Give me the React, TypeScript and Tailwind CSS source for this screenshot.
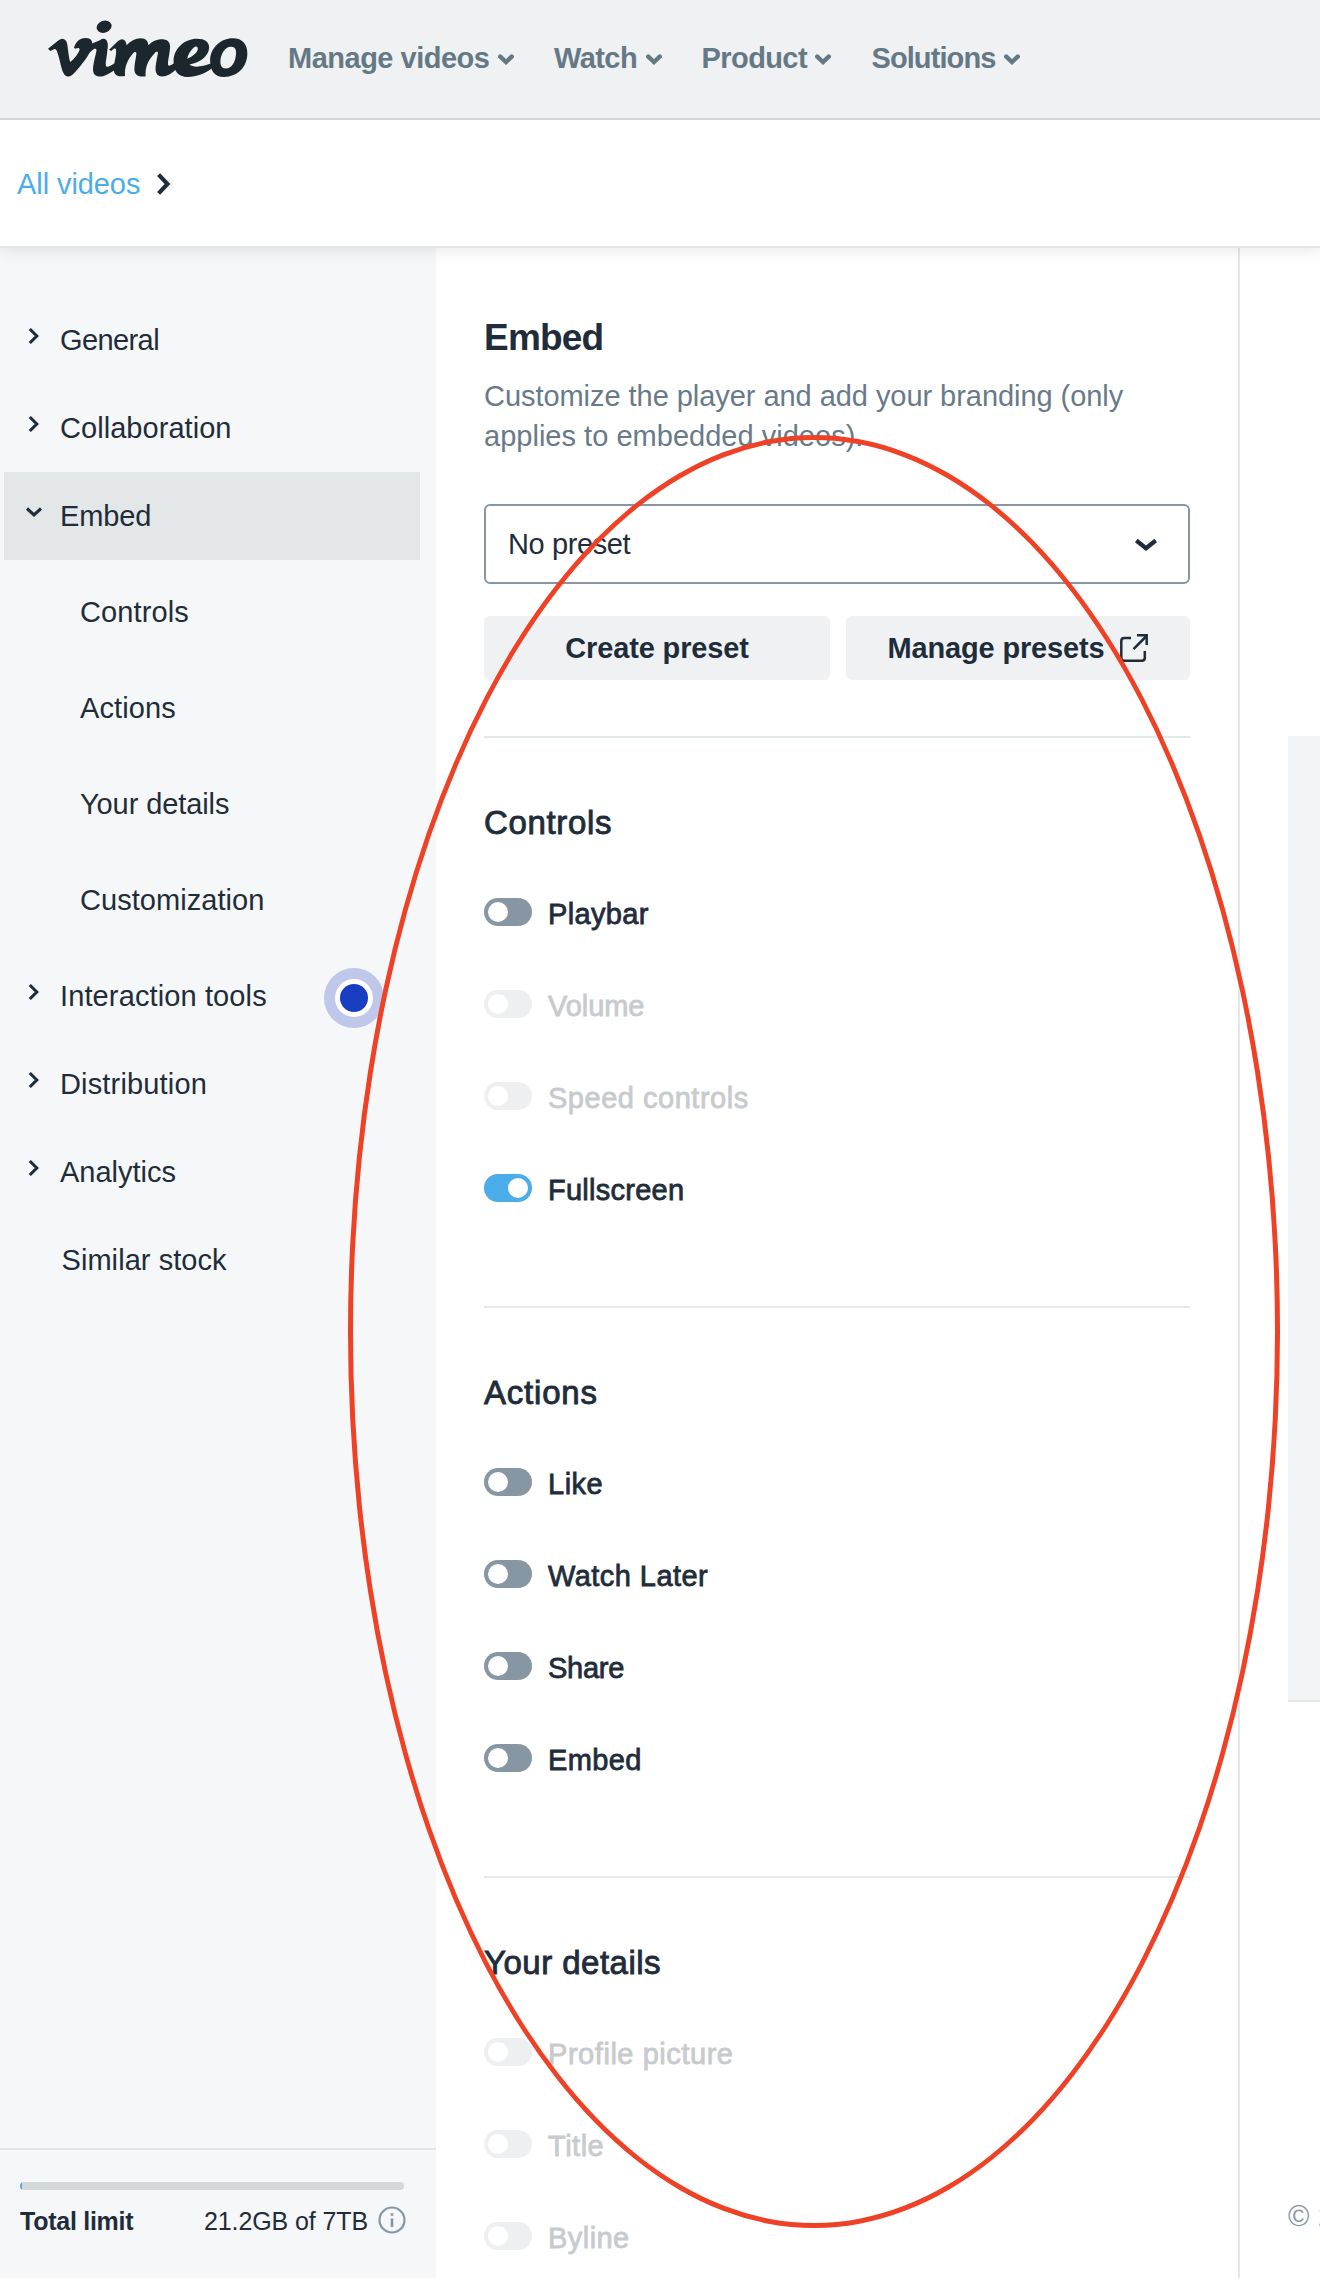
import React from "react";

type ToggleState = "off" | "on" | "disabled";

const navItems = [
  { label: "Manage videos", tracking: "tracking-[-0.5px]" },
  { label: "Watch", tracking: "tracking-[-0.55px]" },
  { label: "Product", tracking: "tracking-[-0.6px]" },
  { label: "Solutions", tracking: "tracking-[-0.9px]" },
];

const embedChildren = [
  { label: "Controls", tracking: "tracking-[0.1px]" },
  { label: "Actions", tracking: "tracking-[0.1px]" },
  { label: "Your details", tracking: "tracking-[-0.1px]" },
  { label: "Customization", tracking: "tracking-[0.05px]" },
];

const sections: {
  title: string;
  tracking: string;
  items: { label: string; state: ToggleState; tracking: string }[];
}[] = [
  {
    title: "Controls",
    tracking: "tracking-[0.65px]",
    items: [
      { label: "Playbar", state: "off", tracking: "tracking-[0.35px]" },
      { label: "Volume", state: "disabled", tracking: "tracking-[-0.05px]" },
      { label: "Speed controls", state: "disabled", tracking: "tracking-[0.52px]" },
      { label: "Fullscreen", state: "on", tracking: "tracking-[0.25px]" },
    ],
  },
  {
    title: "Actions",
    tracking: "tracking-[0.8px]",
    items: [
      { label: "Like", state: "off", tracking: "tracking-[0.5px]" },
      { label: "Watch Later", state: "off", tracking: "tracking-[0.45px]" },
      { label: "Share", state: "off", tracking: "tracking-[-0.25px]" },
      { label: "Embed", state: "off", tracking: "tracking-[0.4px]" },
    ],
  },
  {
    title: "Your details",
    tracking: "tracking-[0.48px]",
    items: [
      { label: "Profile picture", state: "disabled", tracking: "tracking-[0.55px]" },
      { label: "Title", state: "disabled", tracking: "tracking-[0.5px]" },
      { label: "Byline", state: "disabled", tracking: "tracking-[0.45px]" },
    ],
  },
];

function VimeoLogo() {
  return (
    <svg viewBox="12 12 602 174" className="h-[58px] w-[200px] shrink-0" fill="#1c262d" fillRule="evenodd" role="img" aria-label="vimeo">
      <ellipse cx="181" cy="32" rx="23" ry="18" transform="rotate(-20 181 32)" />
      <path d="M12 98 L44 73 Q56 63 66 74 C73 84 72 118 79 138 C92 128 104 112 107 102 C108 96 101 95 96 98 L90 96 C96 76 108 67 124 66 C140 65 147 74 145 88 C142 110 120 138 103 158 C90 174 82 182 74 182 C64 182 58 174 54 160 C48 138 43 112 37 102 C34 98 31 99 27 101 L19 105 Z" />
      <path d="M136 86 L168 73 Q180 64 188 73 C194 82 192 94 190 110 C188 128 184 142 187 150 C189 156 199 151 212 142 L216 160 C198 172 182 183 166 182 C150 181 146 170 148 152 C150 134 156 116 158 104 C158 98 155 97 150 99 L134 112 Z" />
      <path d="M196 101 L222 76 Q236 64 244 74 Q248 80 248 88 C262 74 276 67 290 67 C308 67 314 78 314 88 C328 74 342 70 356 70 C374 70 382 82 379 100 C377 120 372 136 373 146 C374 152 380 150 392 142 L400 158 C384 174 370 182 356 182 C340 182 334 170 336 152 C338 136 341 122 343 112 C343 106 338 106 333 112 C312 134 304 156 306 181 C292 184 272 182 272 160 C272 142 277 126 278 114 C279 106 273 106 268 112 C248 136 242 158 244 180 C226 184 210 180 210 160 C210 140 218 120 217 104 C217 97 213 97 209 99 L202 105 Z" />
      <path d="M390 132 C392 96 424 68 460 68 C484 68 497 78 497 94 C497 120 470 140 438 146 C450 156 476 153 502 143 L506 156 C486 172 460 183 432 183 C404 183 388 164 390 132 Z M431 128 C448 121 462 110 463 98 C463 90 456 90 450 95 C441 103 433 116 431 128 Z" />
      <path d="M500 134 C500 96 532 67 568 67 C598 67 612 86 612 112 C612 154 582 183 542 183 C514 183 500 164 500 134 Z M531 140 C530 116 544 92 563 92 C576 92 579 102 578 114 C576 140 564 158 547 158 C536 158 531 150 531 140 Z" />
    </svg>
  );
}

function SideChevron({ open = false }: { open?: boolean }) {
  return (
    <svg viewBox="0 0 18 18" className="mb-2 size-[18px] shrink-0" fill="none" stroke="currentColor" strokeWidth="3.1">
      <path d={open ? "M2 5.5 9 12l7-6.5" : "M4.8 2l7 7-7 7"} />
    </svg>
  );
}

function SideRow({ label, tracking, open = false }: { label: string; tracking: string; open?: boolean }) {
  return (
    <a className={`ml-1 mr-4 flex h-[88px] items-center gap-[17px] pl-[21px] ${tracking} ${open ? "bg-[#e3e7e7]" : ""}`}>
      <SideChevron open={open} />
      {label}
      {label === "Interaction tools" && (
        <span className="ml-auto mr-9 mt-1 flex size-[60px] items-center justify-center rounded-full bg-[#bfc7ea]">
          <span className="flex size-[38px] items-center justify-center rounded-full bg-white">
            <span className="size-[28px] rounded-full bg-[#173dc1]" />
          </span>
        </span>
      )}
    </a>
  );
}

function Toggle({ state }: { state: ToggleState }) {
  const track = state === "on" ? "justify-end bg-[#4bacea]" : state === "off" ? "bg-[#8796a3]" : "bg-[#edeff0]";
  return (
    <span className={`flex h-7 w-12 shrink-0 items-center rounded-full px-1 ${track}`}>
      <span className="size-5 rounded-full bg-white" />
    </span>
  );
}

export default function App() {
  return (
    <div className="relative flex h-[2284px] w-[1320px] flex-col overflow-hidden bg-white text-[29px] leading-[34px] text-[#1f2d3b] [font-family:'Liberation_Sans',Arial,sans-serif]">
      <header className="relative z-20 flex h-[120px] shrink-0 items-center border-b-2 border-[#d0d7d9] bg-[#eff1f3] pb-0.5 pl-12 font-bold text-[#657985]">
        <div className="mb-[18px]">
          <VimeoLogo />
        </div>
        <nav className="ml-10 flex items-center gap-10">
          {navItems.map((item) => (
            <a key={item.label} className={`flex items-center gap-[8.5px] ${item.tracking}`}>
              {item.label}
              <svg viewBox="0 0 16 11" className="mt-0.5 h-[11px] w-4" fill="none" stroke="currentColor" strokeWidth="4.4" strokeLinecap="round">
                <path d="M2.3 2.6 8 8l5.7-5.4" />
              </svg>
            </a>
          ))}
        </nav>
      </header>

      <div className="relative z-10 flex h-[128px] shrink-0 items-center gap-[17px] border-b-2 border-[#e3e7e7] bg-white pl-[17px] pt-0.5 shadow-[0_2px_16px_rgba(0,0,0,0.1)]">
        <a className="tracking-[-0.08px] text-[#4bacea]">All videos</a>
        <svg viewBox="0 0 14 22" className="h-[22px] w-[14px]" fill="none" stroke="currentColor" strokeWidth="4.2">
          <path d="M1.6 1.6 10.5 11 1.6 20.4" />
        </svg>
      </div>

      <div className="flex h-[2030px] shrink-0">
        <aside className="flex w-[436px] shrink-0 flex-col bg-[#f6f7f9] pt-12">
          <SideRow label="General" tracking="tracking-[-0.6px]" />
          <SideRow label="Collaboration" tracking="tracking-[0.05px]" />
          <SideRow label="Embed" tracking="tracking-[-0.1px]" open />
          <div className="py-1 pl-20">
            {embedChildren.map((item) => (
              <a key={item.label} className={`flex h-24 items-center ${item.tracking}`}>
                {item.label}
              </a>
            ))}
          </div>
          <SideRow label="Interaction tools" tracking="tracking-[0.12px]" />
          <SideRow label="Distribution" tracking="tracking-[0.16px]" />
          <SideRow label="Analytics" tracking="tracking-[-0.02px]" />
          <a className="flex h-[88px] items-center pl-[61.5px] tracking-[0.06px]">Similar stock</a>
          <div className="mt-auto h-[130px] border-t-2 border-[#e3e6e8] pl-5 pt-8 text-[25px]">
            <div className="h-2 w-96 overflow-hidden rounded-full bg-[#d5d8da]">
              <div className="h-full w-0.5 bg-[#4bacea]" />
            </div>
            <div className="mt-[15px] flex h-8 w-[387px] items-center">
              <span className="font-bold tracking-[-0.26px]">Total limit</span>
              <span className="ml-auto tracking-[-0.1px]">21.2GB of 7TB</span>
              <svg viewBox="0 0 28 28" className="mb-0.5 ml-[10px] mr-px size-7 shrink-0" fill="none" stroke="#8796a3" strokeWidth="2.2">
                <circle cx="14" cy="14" r="12.5" />
                <path d="M14 12.5V21M14 7.3v2.5" strokeWidth="2.6" />
              </svg>
            </div>
          </div>
        </aside>

        <main className="w-[804px] shrink-0 border-r-2 border-[#e3e8e8] pl-12 pt-[70px]">
          <div className="w-[706px]">
            <h1 className="text-[37px] font-bold leading-10 tracking-[-0.8px]">Embed</h1>
            <p className="mt-[18px] leading-10 text-[#687a89]">
              <span className="block whitespace-nowrap tracking-[-0.05px]">Customize the player and add your branding (only</span>
              <span className="block tracking-[0.02px]">applies to embedded videos).</span>
            </p>
            <div className="mt-12 flex h-20 items-center justify-between rounded-md border-2 border-[#8796a3] pl-[22px] pr-[30px]">
              <span className="tracking-[-0.4px]">No preset</span>
              <svg viewBox="0 0 24 14" className="mt-0.5 h-[14px] w-6" fill="none" stroke="currentColor" strokeWidth="4.2">
                <path d="M2.3 2.5 12 10.2l9.7-7.7" />
              </svg>
            </div>
            <div className="mt-8 flex h-16 gap-4 font-bold">
              <button className="flex w-[346px] items-center justify-center rounded-md bg-[#eff1f3] tracking-[-0.14px]">Create preset</button>
              <button className="flex w-[344px] items-center justify-center gap-4 rounded-md bg-[#eff1f3] tracking-[-0.16px]">
                Manage presets
                <svg viewBox="0 0 28 28" className="size-7" fill="none" stroke="currentColor" strokeWidth="2.5">
                  <path d="M11 4H4.2Q1.3 4 1.3 7v16.8q0 3 2.9 3h17.6q3 0 3-3V17" />
                  <path d="M13.5 15.2 26.5 2M17 1.3h9.7V11" />
                </svg>
              </button>
            </div>
            {sections.map((section) => (
              <section key={section.title} className="mt-[104px] border-t-2 border-[#e3e8e8] pt-[65px] first-of-type:mt-14">
                <h2 className={`text-[33px] font-normal leading-10 [-webkit-text-stroke:0.9px_currentColor] ${section.tracking}`}>{section.title}</h2>
                <div className="mt-[55px] flex flex-col gap-16">
                  {section.items.map((item) => (
                    <label
                      key={item.label}
                      className={`flex h-7 items-center gap-4 ${item.state === "disabled" ? "text-[#c7cbce]" : ""}`}
                    >
                      <Toggle state={item.state} />
                      <span className={`mt-1 leading-7 [-webkit-text-stroke:0.8px_currentColor] ${item.tracking}`}>{item.label}</span>
                    </label>
                  ))}
                </div>
              </section>
            ))}
          </div>
        </main>

        <div className="min-w-0 flex-1 overflow-hidden pl-12 pt-[488px]">
          <div className="h-[966px] border-b-2 border-[#e3e8e8] bg-[#f2f4f6]" />
          <p className="mt-[494px] whitespace-nowrap leading-10 tracking-[0.3px] text-[#8796a3]">© 2022</p>
        </div>
      </div>

      {/* Annotation ring over the embed settings */}
      <div className="pointer-events-none absolute left-[348px] top-[435px] z-20 h-[1793px] w-[932px] rounded-[50%] border-[5px] border-[#ee4126]" />
    </div>
  );
}
